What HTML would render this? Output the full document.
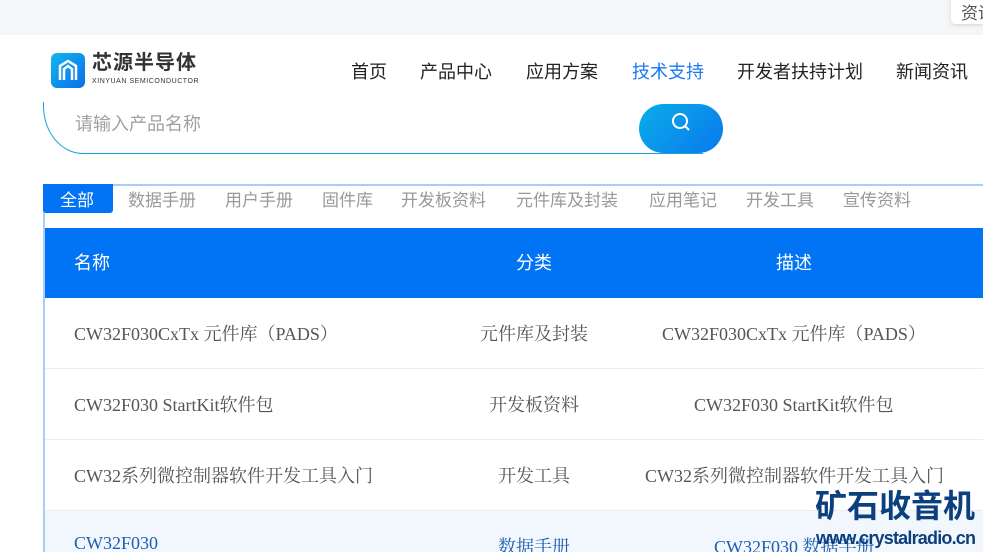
<!DOCTYPE html>
<html><head><meta charset="utf-8"><style>
*{margin:0;padding:0;box-sizing:border-box}
html,body{width:983px;height:552px;overflow:hidden}
body{background:#fff;position:relative;font-family:"Liberation Sans","Noto Sans CJK SC",sans-serif}
.top{position:absolute;left:0;top:0;width:983px;height:35px;background:#f5f6f8}
.tip{position:absolute;left:951px;top:-4px;width:32px;height:28px;background:#fff;border-radius:4px 0 0 4px;box-shadow:0 1px 4px rgba(0,0,0,.15);font-size:17px;color:#555;padding:3px 0 0 10px;overflow:hidden;white-space:nowrap}
.nav{position:absolute;top:58px;font-size:18px;color:#222}
.srch{position:absolute;left:43px;top:102px;width:660px;height:52px;border:1px solid #1aa0dc;border-top:none;border-right:none;border-radius:0 0 0 40px/0 0 0 48px}
.btn{position:absolute;left:639px;top:104px;width:84px;height:49px;background:linear-gradient(135deg,#09aee8,#0a78ee);border-radius:40px}
.tabs{position:absolute;left:43px;top:184px;width:940px;height:368px;border-left:2px solid #a8cdf6;border-top:2px solid #a8cdf6}
.tab{position:absolute;top:186px;font-size:17px;color:#999}
.th{position:absolute;left:45px;top:228px;width:938px;height:70px;background:#0173f5;color:#fff;font-size:18px}
.row{position:absolute;left:45px;width:938px;height:71px;border-bottom:1px solid #e8edf3;font-family:"Liberation Serif","Noto Serif CJK SC",serif;font-size:18px;color:#555;overflow:hidden}
.row span{position:absolute;top:22px;white-space:nowrap}
</style></head><body>
<div class="top"></div><div class="tip">资讯</div>
<svg style="position:absolute;left:51px;top:53px" width="34" height="35" viewBox="0 0 34 35"><defs><linearGradient id="g" x1="0" y1="0" x2="1" y2="1"><stop offset="0" stop-color="#12b6f0"/><stop offset="1" stop-color="#0a6fe8"/></linearGradient></defs><rect width="34" height="35" rx="6" fill="url(#g)"/><path d="M9 27V13l8-5 8 5v14M13 27V16l4-3 4 3v11" stroke="#fff" stroke-width="2.5" fill="none"/></svg>
<div style="position:absolute;left:92px;top:53px;font-size:20px;font-weight:bold;color:#333;letter-spacing:1px;line-height:1">芯源半导体</div>
<div style="position:absolute;left:92px;top:78px;font-size:7px;color:#333;letter-spacing:0.55px;line-height:1">XINYUAN SEMICONDUCTOR</div>
<div class="nav" style="left:351px">首页</div>
<div class="nav" style="left:420px">产品中心</div>
<div class="nav" style="left:526px">应用方案</div>
<div class="nav" style="left:632px;color:#1a79ef">技术支持</div>
<div class="nav" style="left:737px">开发者扶持计划</div>
<div class="nav" style="left:896px">新闻资讯</div>
<div class="srch"></div>
<div style="position:absolute;left:75px;top:110px;font-size:18px;color:#a0a0a0">请输入产品名称</div>
<div class="btn"></div>
<svg style="position:absolute;left:670px;top:111px" width="22" height="22" viewBox="0 0 22 22"><circle cx="10" cy="10" r="7" stroke="#fff" stroke-width="2" fill="none"/><path d="M15 15l4 4" stroke="#fff" stroke-width="2"/></svg>
<div class="tabs" style="height:368px"></div>
<div style="position:absolute;left:43px;top:184px;width:70px;height:29px;background:#0173f5;border-radius:0 0 3px 3px;color:#fff;font-size:17px;padding:2px 0 0 17px">全部</div>
<div class="tab" style="left:128px">数据手册</div>
<div class="tab" style="left:225px">用户手册</div>
<div class="tab" style="left:322px">固件库</div>
<div class="tab" style="left:401px">开发板资料</div>
<div class="tab" style="left:516px">元件库及封装</div>
<div class="tab" style="left:649px">应用笔记</div>
<div class="tab" style="left:746px">开发工具</div>
<div class="tab" style="left:843px">宣传资料</div>
<div class="th"><span style="position:absolute;left:29px;top:21px">名称</span><span style="position:absolute;left:471px;top:21px">分类</span><span style="position:absolute;left:731px;top:21px">描述</span></div>
<div class="row" style="top:298px"><span style="left:29px">CW32F030CxTx 元件库（PADS）</span><span style="left:435px">元件库及封装</span><span style="left:617px">CW32F030CxTx 元件库（PADS）</span></div>
<div class="row" style="top:369px"><span style="left:29px">CW32F030 StartKit软件包</span><span style="left:444px">开发板资料</span><span style="left:649px">CW32F030 StartKit软件包</span></div>
<div class="row" style="top:440px"><span style="left:29px">CW32系列微控制器软件开发工具入门</span><span style="left:453px">开发工具</span><span style="left:600px">CW32系列微控制器软件开发工具入门</span></div>
<div class="row" style="top:511px;height:41px;border:none;background:#f2f7fe;color:#1d5fb0"><span style="left:29px">CW32F030</span><span style="left:453px">数据手册</span><span style="left:669px">CW32F030 数据手册</span></div>
<div style="position:absolute;left:815px;top:490px;font-size:32px;font-weight:bold;color:#0c3f7e;line-height:1">矿石收音机</div>
<div style="position:absolute;left:816px;top:529px;font-size:18px;font-weight:bold;color:#0c3f7e;line-height:1;letter-spacing:-0.8px;white-space:nowrap">www.crystalradio.cn</div>
</body></html>
